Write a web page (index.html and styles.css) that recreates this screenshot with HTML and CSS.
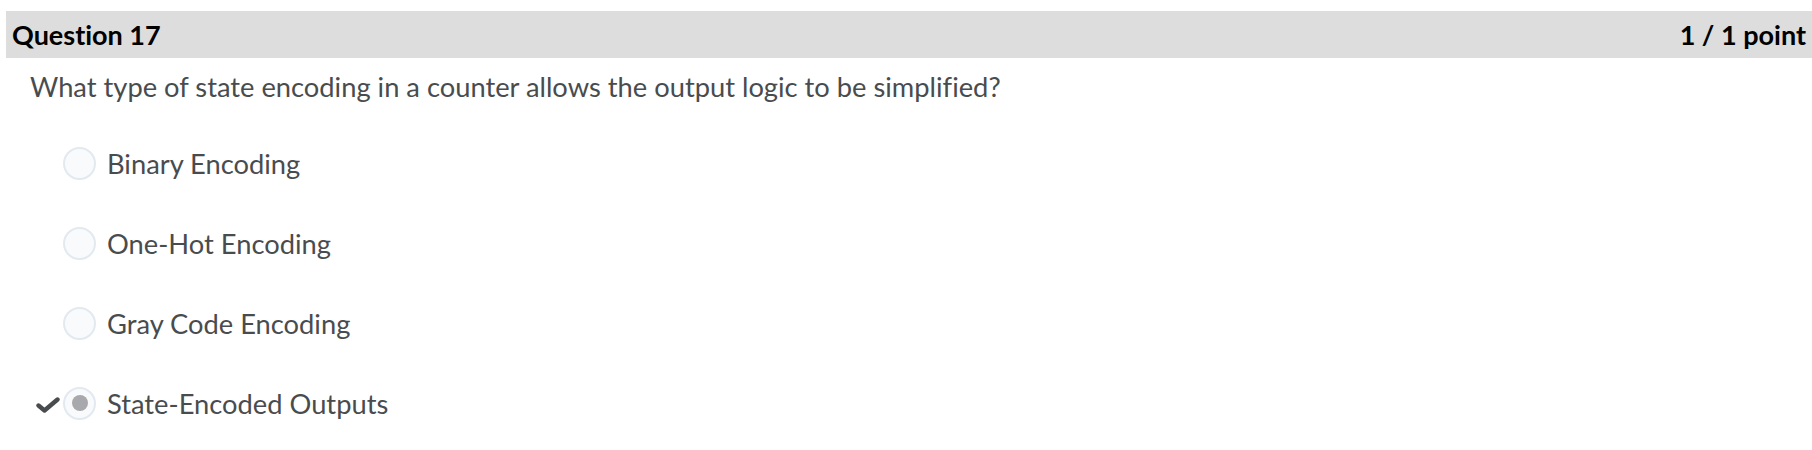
FILE: index.html
```html
<!DOCTYPE html>
<html>
<head>
<meta charset="utf-8">
<link rel="stylesheet" href="styles.css">
</head>
<body>
<div class="question-card">
  <div class="q-header">
    <span class="q-title">Question 17</span>
    <span class="q-score">1 / 1 point</span>
  </div>
  <p class="q-text">What type of state encoding in a counter allows the output logic to be simplified?</p>
  <ul class="options">
    <li class="option"><span class="mark"></span><span class="radio"></span><span class="label">Binary Encoding</span></li>
    <li class="option"><span class="mark"></span><span class="radio"></span><span class="label">One-Hot Encoding</span></li>
    <li class="option"><span class="mark"></span><span class="radio"></span><span class="label">Gray Code Encoding</span></li>
    <li class="option"><span class="mark"><svg class="check" viewBox="0 0 24 16" width="24" height="16"><path d="M2.5 8.5 L8.5 13.5 L21.5 2.5" fill="none" stroke="#494c4e" stroke-width="4.4" stroke-linecap="round" stroke-linejoin="round"/></svg></span><span class="radio checked"></span><span class="label">State-Encoded Outputs</span></li>
  </ul>
</div>
</body>
</html>
```
FILE: styles.css
```css
html, body {
  margin: 0;
  padding: 0;
  background: #ffffff;
}
body {
  font-family: Lato, "Noto Sans", sans-serif;
  color: #494c4e;
  font-variant-ligatures: none;
}
.question-card {
  padding-top: 11px;
  padding-left: 6px;
}
.q-header {
  height: 47px;
  background: #dddddd;
  display: flex;
  justify-content: space-between;
  align-items: center;
  padding: 0 6px 0 6px;
  color: #000000;
  font-weight: 700;
  font-size: 27px;
}
.q-text {
  margin: 0;
  padding: 12px 0 0 24px;
  font-size: 27.3px;
  line-height: 34px;
}
.options {
  list-style: none;
  margin: 0;
  padding: 0;
}
.option {
  display: flex;
  align-items: center;
  height: 80px;
}
.option:first-child {
  margin-top: 19px;
}
.mark {
  width: 57px;
  display: flex;
  justify-content: flex-end;
  padding-right: 3px;
  padding-top: 3px;
  box-sizing: border-box;
}
.radio {
  width: 33px;
  height: 33px;
  box-sizing: border-box;
  border-radius: 50%;
  border: 2px solid #e3e9f1;
  background: #f9fafb;
  display: flex;
  align-items: center;
  justify-content: center;
  margin-right: 11px;
}
.radio.checked::after {
  content: "";
  width: 16px;
  height: 16px;
  border-radius: 50%;
  background: #a7a9ac;
}
.label {
  font-size: 27.3px;
}
```
